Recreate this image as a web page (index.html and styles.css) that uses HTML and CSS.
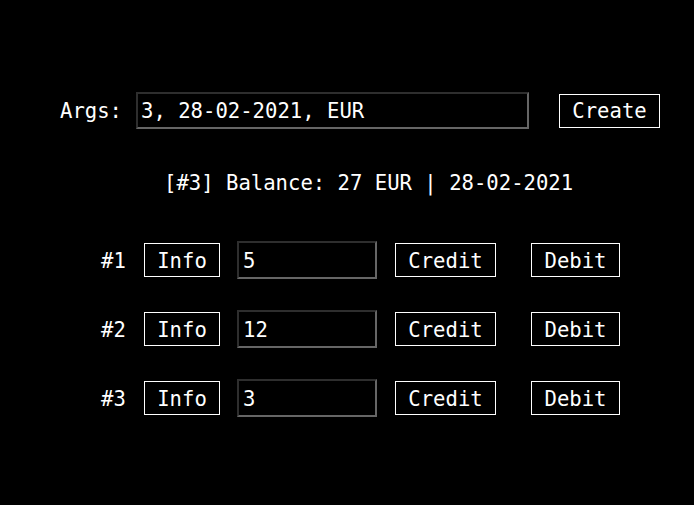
FILE: index.html
```html
<!DOCTYPE html>
<html>
<head>
<meta charset="utf-8">
<link rel="stylesheet" href="styles.css">
</head>
<body>
<main class="app">
  <div class="args-row">
    <label class="args-label">Args:</label>
    <input class="field field-args" type="text" value="3, 28-02-2021, EUR">
    <button class="btn btn-create">Create</button>
  </div>
  <div class="balance">[#3] Balance: 27 EUR | 28-02-2021</div>
  <div class="accounts">
    <div class="account-row">
      <span class="acc-id">#1</span>
      <button class="btn btn-info">Info</button>
      <input class="field field-amount" type="text" value="5">
      <button class="btn btn-credit">Credit</button>
      <button class="btn btn-debit">Debit</button>
    </div>
    <div class="account-row">
      <span class="acc-id">#2</span>
      <button class="btn btn-info">Info</button>
      <input class="field field-amount" type="text" value="12">
      <button class="btn btn-credit">Credit</button>
      <button class="btn btn-debit">Debit</button>
    </div>
    <div class="account-row">
      <span class="acc-id">#3</span>
      <button class="btn btn-info">Info</button>
      <input class="field field-amount" type="text" value="3">
      <button class="btn btn-credit">Credit</button>
      <button class="btn btn-debit">Debit</button>
    </div>
  </div>
</main>
</body>
</html>
```
FILE: styles.css
```css
html, body {
  margin: 0;
  padding: 0;
  background: #000;
}
body {
  color: #fff;
  font-family: "DejaVu Sans Mono", "Liberation Mono", monospace;
  font-size: 20.6px;
  line-height: 24px;
}
.app {
  padding-top: 92px;
  display: flex;
  flex-direction: column;
}
.args-row {
  display: flex;
  align-items: center;
  height: 37px;
  padding-left: 60px;
}
.args-label {
  width: 76px;
}
.field {
  box-sizing: border-box;
  height: 38px;
  margin: 0;
  padding: 1px 4px 0;
  background: #000;
  color: #fff;
  font: inherit;
  border: 2px solid;
  border-color: #2e2e2e #666 #666 #2e2e2e;
  outline: none;
}
.field-args {
  width: 393px;
  height: 37px;
  margin-right: 30px;
  padding-left: 3px;
}
.btn {
  box-sizing: border-box;
  height: 34px;
  margin: 0;
  padding: 1px 0 0;
  background: #000;
  color: #fff;
  font: inherit;
  text-align: center;
  border: 1px solid #fff;
  border-radius: 0;
}
.btn-create {
  width: 101px;
}
.btn-info {
  width: 76px;
}
.btn-credit {
  width: 101px;
}
.btn-debit {
  width: 89px;
  margin-left: 35px;
}
.balance {
  margin-top: 41px;
  padding-left: 164px;
  height: 24px;
  padding-top: 1px;
}
.accounts {
  margin-top: 46px;
  display: flex;
  flex-direction: column;
  gap: 31px;
}
.account-row {
  display: flex;
  align-items: center;
  height: 38px;
  padding-left: 101px;
}
.acc-id {
  width: 43px;
  padding-top: 1px;
}
.field-amount {
  width: 140px;
  margin: 0 18px 0 17px;
}
```
